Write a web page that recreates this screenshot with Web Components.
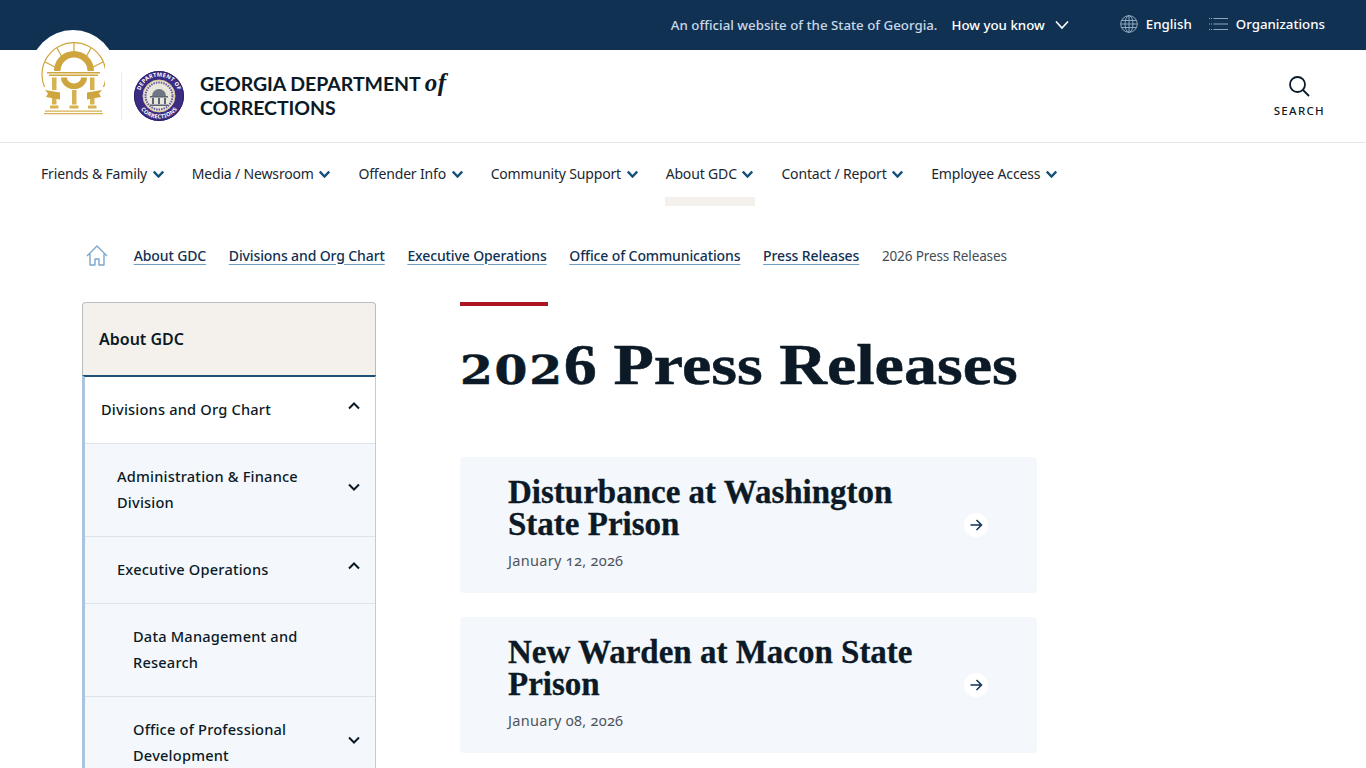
<!DOCTYPE html>
<html lang="en">
<head>
<meta charset="utf-8">
<title>2026 Press Releases</title>
<style>
  html, body { margin: 0; height: 768px; overflow: hidden; background: #fff; }
  body { font-family: "Noto Sans", sans-serif; color: #0b1a26; font-variant-numeric: oldstyle-nums; }
  .page { display: grid; grid-template-columns: 294px 577px; column-gap: 84px; padding-left: 82px; align-items: start; }
</style>
</head>
<body>
<gov-topbar></gov-topbar>
<gov-header></gov-header>
<gov-nav></gov-nav>
<gov-breadcrumb></gov-breadcrumb>
<div class="page">
  <side-menu title-text="About GDC">
    <side-item open>Divisions and Org Chart</side-item>
    <side-item level="1" closed>Administration &amp; Finance Division</side-item>
    <side-item level="1" open>Executive Operations</side-item>
    <side-item level="2">Data Management and Research</side-item>
    <side-item level="2" closed>Office of Professional Development</side-item>
  </side-menu>
  <main>
    <page-title><span class="o">202</span>6 Press Releases</page-title>
    <press-card date="January 12, 2026">Disturbance at Washington State Prison</press-card>
    <press-card date="January 08, 2026">New Warden at Macon State Prison</press-card>
  </main>
</div>

<script>
const FONT = '"Noto Sans", sans-serif';
const SERIF = '"Liberation Serif", serif';

class GovTopbar extends HTMLElement {
	constructor() {
		super();
		this.attachShadow({ mode: "open" });
		this.shadowRoot.innerHTML = `
      <style>
        :host { display: flex; height: 50px; background: #113153; color: #fff; align-items: center; justify-content: flex-end; padding-right: 41px; font: 500 13.3px ${FONT}; }
        .note { color: #c9d8e6; margin-right: 14px; }
        .know { margin-right: 10px; }
        .lang { display: flex; align-items: center; gap: 8px; margin-left: 51px; margin-top: -2px; }
        .org { display: flex; align-items: center; gap: 8px; margin-left: 17px; margin-top: -2px; }
        svg { display: block; }
      </style>
      <span class="note">An official website of the State of Georgia.</span>
      <span class="know">How you know</span>
      <svg width="14" height="10" viewBox="0 0 14 10" fill="none" stroke="#fff" stroke-width="1.6"><path d="M1 1.500 7 8l6-6.500"/></svg>
      <div class="lang">
        <svg width="18" height="18" viewBox="0 0 18 18" fill="none" stroke="#8fa6bd" stroke-width="1"><circle cx="9" cy="9" r="8.300"/><ellipse cx="9" cy="9" rx="4" ry="8.300"/><path d="M9 .7v16.600M1.500 5.500h15M.7 9h16.600M1.500 12.500h15"/></svg>
        <span>English</span>
      </div>
      <div class="org">
        <svg width="19" height="14" viewBox="0 0 19 14" fill="none" stroke="#8fa6bd" stroke-width="1.200"><path d="M0 1.500h3M0 7h3M0 12.500h3" stroke-dasharray="1 1"/><path d="M4.500 1.500H19M4.500 7H19M4.500 12.500H19"/></svg>
        <span>Organizations</span>
      </div>
    `;
	}
}

class GovHeader extends HTMLElement {
	constructor() {
		super();
		this.attachShadow({ mode: "open" });
		this.shadowRoot.innerHTML = `
      <style>
        :host { display: flex; position: relative; height: 92px; border-bottom: 1px solid #e6e6e6; align-items: center; padding: 0 41px 0 41px; }
        .badge { position: absolute; left: 30px; top: -20px; width: 86px; height: 86px; border-radius: 50%; background: #fff; }
        .state { position: relative; width: 64px; height: 74px; align-self: flex-start; margin-top: -8px; }
        .divider { width: 1px; height: 48px; background: #ececec; margin: 0 12px 0 16px; }
        .seal { display: block; width: 50px; height: 50px; margin-right: 16px; }
        .name { font: 700 19.5px/24px Lato, sans-serif; color: #0b1a26; flex: 1; letter-spacing: -.05px; }
        .name i { font: italic 700 25px/0 ${SERIF}; letter-spacing: .5px; }
        .search { display: flex; flex-direction: column; align-items: center; gap: 6px; font: 500 11.5px ${FONT}; letter-spacing: 1.3px; color: #0b1a26; }
        text { font: 700 5.6px ${FONT}; fill: #fff; letter-spacing: .25px; }
      </style>
      <div class="badge"></div>
      <svg class="state" viewBox="0 0 64 74" fill="none">
        <g stroke="#cfa63e" stroke-width="1.200">
          <path d="M3.500 45A32 32 0 1 1 62.500 45"/>
          <path d="M33 1v10M16 6l6 11M50 6l-6 11M4 20l10 5M62 20l-10 5"/>
        </g>
        <path d="M13 29a20 20 0 0 1 40 0h-6.500a13.500 13.500 0 0 0-27 0z" fill="#cfa63e"/>
        <path d="M6 30h53v1.500H6zM8 32.500h49V34H8z" fill="#cfa63e"/>
        <path d="M20 35.500h6a7 6 0 0 0 14 0h6a13 11.500 0 0 1-26 0z" fill="#cfa63e"/>
        <path d="M11 35.500h4.500V48H11zM49 35.500h4.500V48H49zM31 48h4.500v14.500H31zM11 56h4.500v6.500H11zM49 56h4.500v6.500H49z" fill="#d6b252"/>
        <path d="M4 48l15 2.500v7L5 55l2-3.500zM61 48l-15 2.500v7L60 55l-2-3.500z" fill="#cfa63e"/>
        <path d="M9 63.500h8.500v3H9zM28.500 63.500h9v3h-9zM47 63.500h8.500v3H47zM4 68.500h57v1.200H4zM3 71h59v1.200H3z" fill="#d6b252"/>
      </svg>
      <div class="divider"></div>
      <svg class="seal" viewBox="0 0 50 50">
        <defs>
          <path id="sealTop" d="M5.500 25a19.500 19.500 0 0 1 39 0"/>
          <path id="sealBottom" d="M2.500 25a22.500 22.500 0 0 0 45 0"/>
        </defs>
        <circle cx="25" cy="25" r="25" fill="#3c2c84"/>
        <text><textPath href="#sealTop" startOffset="50%" text-anchor="middle">DEPARTMENT OF</textPath></text>
        <text><textPath href="#sealBottom" startOffset="50%" text-anchor="middle">CORRECTIONS</textPath></text>
        <circle cx="25" cy="25" r="16" fill="#e9e6dc" stroke="#d8c98a" stroke-width="1"/>
        <circle cx="25" cy="25" r="13.500" fill="none" stroke="#3c2c84" stroke-width="2" stroke-dasharray="1.500 1" opacity=".75"/>
        <path d="M18 25a7 7 0 0 1 14 0z" fill="#6f7684"/>
        <path d="M16 25h18v1.500H16zM18 27h2v6h-2zM24 27h2v6h-2zM30 27h2v6h-2zM16 33.500h18v1.500H16z" fill="#5e6675"/>
        <circle cx="25" cy="25" r="24.500" fill="none" stroke="#2a2168"/>
      </svg>
      <div class="name">GEORGIA DEPARTMENT <i>of</i><br>CORRECTIONS</div>
      <div class="search">
        <svg width="22" height="22" viewBox="0 0 22 22" fill="none" stroke="#0b1a26" stroke-width="1.800"><circle cx="9.500" cy="9.500" r="7.500"/><path d="m15 15 6 6"/></svg>
        <span>SEARCH</span>
      </div>
    `;
	}
}

class GovNav extends HTMLElement {
	constructor() {
		super();
		const items = ["Friends & Family", "Media / Newsroom", "Offender Info", "Community Support", "About GDC", "Contact / Report", "Employee Access"];
		this.attachShadow({ mode: "open" });
		this.shadowRoot.innerHTML = `
      <style>
        :host { display: flex; height: 63px; padding-left: 41px; gap: 28.1px; font: 400 14px ${FONT}; letter-spacing: -.16px; color: #1b2731; }
        a { display: flex; align-items: flex-start; gap: 5.5px; height: 63px; position: relative; box-sizing: border-box; padding-top: 21px; }
        a.active::after { content: ""; position: absolute; left: -1px; right: -2px; bottom: 0; height: 9px; background: #f4f1ed; }
        svg { margin-top: 6px; }
      </style>
      ${items.map((t) => `<a class="${t === "About GDC" ? "active" : ""}">${t.replace("&", "&amp;")}
        <svg width="11" height="8" viewBox="0 0 11 8" fill="none" stroke="#155079" stroke-width="2.400"><path d="M.8 1.500 5.500 6.500l4.700-5"/></svg></a>`).join("")}
    `;
	}
}

class GovBreadcrumb extends HTMLElement {
	constructor() {
		super();
		const links = ["About GDC", "Divisions and Org Chart", "Executive Operations", "Office of Communications", "Press Releases"];
		this.attachShadow({ mode: "open" });
		this.shadowRoot.innerHTML = `
      <style>
        :host { display: flex; align-items: center; gap: 22.7px; height: 96px; padding: 2px 0 0 86px; box-sizing: border-box; font: 500 14px ${FONT}; letter-spacing: -.12px; color: #113153; }
        a { text-decoration: underline; text-decoration-color: #6f9cc2; text-underline-offset: 3px; }
        span { font-weight: 400; font-size: 13.5px; color: #444d55; margin-top: 1px; }
        svg { margin-right: 3px; }
      </style>
      <svg width="22" height="21" viewBox="0 0 22 21" fill="none" stroke="#7ba7cd" stroke-width="1.400" stroke-linejoin="round"><path d="M1 11 11 1l10 10M4 9v11h5v-6h4v6h5V9"/></svg>
      ${links.map((t) => `<a>${t}</a>`).join("")}
      <span>2026 Press Releases</span>
    `;
	}
}

class SideMenu extends HTMLElement {
	constructor() {
		super();
		this.attachShadow({ mode: "open" });
		this.shadowRoot.innerHTML = `
      <style>
        :host { display: block; font-family: ${FONT}; }
        .head { height: 73px; box-sizing: border-box; display: flex; align-items: center; padding-left: 16px; background: #f4f1ed; border: 1px solid #bcbcbc; border-bottom: 0; border-radius: 4px 4px 0 0; font: 600 16px ${FONT}; color: #0b1a26; }
        .list { border-top: 2px solid #1c5078; border-left: 3px solid #a9c4dc; border-right: 1px solid #c3ccd5; }
      </style>
      <div class="head"></div>
      <div class="list"><slot></slot></div>
    `;
		this.shadowRoot.querySelector(".head").textContent = this.getAttribute("title-text");
	}
}

class SideItem extends HTMLElement {
	constructor() {
		super();
		this.attachShadow({ mode: "open" });
		this.shadowRoot.innerHTML = `
      <style>
        :host { display: flex; align-items: center; box-sizing: border-box; padding: 19px 15px 21px 16px; border-bottom: 1px solid #dde3e9; background: #f4f7fb; font: 500 14.6px/26px ${FONT}; letter-spacing: .2px; color: #0b1a26; }
        :host([level="1"]) { padding-left: 32px; }
        :host([level="2"]) { padding-left: 48px; }
        :host(:not([level])) { background: #fff; }
        .t { flex: 1; max-width: 200px; }
        svg { margin-left: auto; flex: none; }
        :host([open]) svg { margin-top: -6px; }
        :host([closed]) svg { margin-top: -4px; }
      </style>
      <div class="t"><slot></slot></div>
      <svg width="12" height="8" viewBox="0 0 12 8" fill="none" stroke="#0b1a26" stroke-width="2"></svg>
    `;
	}
	connectedCallback() {
		const svg = this.shadowRoot.querySelector("svg");
		if (this.hasAttribute("open")) svg.innerHTML = '<path d="M1 6.500 6 1.500l5 5"/>';
		else if (this.hasAttribute("closed")) svg.innerHTML = '<path d="M1 1.500 6 6.500l5-5"/>';
		else svg.style.display = "none";
	}
}

class PageTitle extends HTMLElement {
	constructor() {
		super();
		this.attachShadow({ mode: "open" });
		this.shadowRoot.innerHTML = `
      <style>
        :host { display: block; height: 155px; }
        .rule { width: 88px; height: 4px; background: #ab1420; }
        h1 { margin: 27px 0 0; font: 700 56px/64px ${SERIF}; color: #0b1a26; white-space: nowrap; transform: scaleX(1.18); transform-origin: left; -webkit-text-stroke: .5px #0b1a26; }
        ::slotted(.o) { font: 700 40px "DejaVu Serif", serif; letter-spacing: 1.5px; }
      </style>
      <div class="rule"></div>
      <h1><slot></slot></h1>
    `;
	}
}

class PressCard extends HTMLElement {
	constructor() {
		super();
		this.attachShadow({ mode: "open" });
		this.shadowRoot.innerHTML = `
      <style>
        :host { display: flex; align-items: center; height: 136px; box-sizing: border-box; margin-bottom: 24px; padding: 0 49px 0 48px; background: #f4f7fb; border-radius: 4px; }
        .body { flex: 1; max-width: 410px; margin-top: -4px; }
        h2 { margin: 0 0 9px; font: 700 33px/32px ${SERIF}; color: #0b1a26; -webkit-text-stroke: .3px #0b1a26; }
        .date { font: 400 14.5px/22px ${FONT}; color: #4c555d; letter-spacing: .3px; font-variant-numeric: oldstyle-nums; }
        .go { margin-left: auto; width: 24px; height: 24px; border-radius: 50%; background: #fff; display: flex; align-items: center; justify-content: center; }
      </style>
      <div class="body">
        <h2><slot></slot></h2>
        <div class="date"></div>
      </div>
      <div class="go"><svg width="14" height="14" viewBox="0 0 14 14" fill="none" stroke="#113153" stroke-width="1.500"><path d="M1.500 7h11M7.500 2 12.500 7l-5 5"/></svg></div>
    `;
		this.shadowRoot.querySelector(".date").textContent = this.getAttribute("date");
	}
}

customElements.define("gov-topbar", GovTopbar);
customElements.define("gov-header", GovHeader);
customElements.define("gov-nav", GovNav);
customElements.define("gov-breadcrumb", GovBreadcrumb);
customElements.define("side-menu", SideMenu);
customElements.define("side-item", SideItem);
customElements.define("page-title", PageTitle);
customElements.define("press-card", PressCard);
</script>
</body>
</html>
